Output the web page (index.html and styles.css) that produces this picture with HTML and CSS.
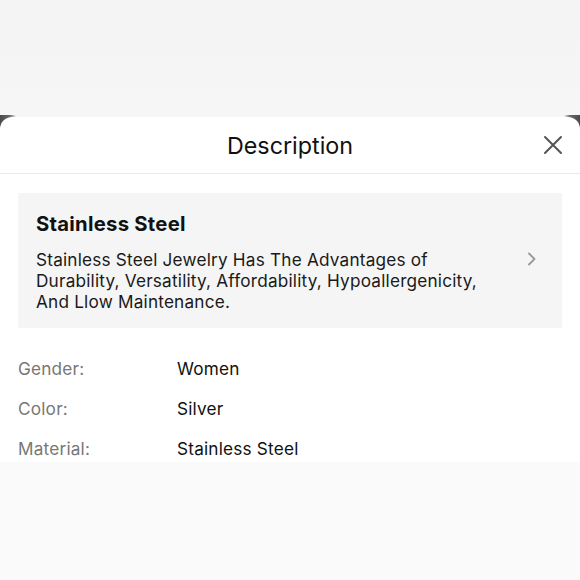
FILE: index.html
```html
<!DOCTYPE html>
<html>
<head>
<meta charset="utf-8">
<link rel="stylesheet" href="styles.css">
</head>
<body>
<div class="top-area"><div class="corner-strip"></div></div>
<div class="sheet">
  <div class="header">
    <div class="title">Description</div>
    <svg class="close" width="20" height="20" viewBox="0 0 20 20"><path d="M2 2 L18 18 M18 2 L2 18" stroke="#555" stroke-width="2" fill="none" stroke-linecap="round"/></svg>
  </div>
  <div class="content">
    <div class="card">
      <div class="card-text">
        <div class="card-title">Stainless Steel</div>
        <div class="card-body">Stainless Steel Jewelry Has The Advantages of Durability, Versatility, Affordability, Hypoallergenicity, And Llow Maintenance.</div>
      </div>
      <svg class="chev" width="10" height="14" viewBox="0 0 10 14"><path d="M2 1.5 L7.5 7 L2 12.5" stroke="#999" stroke-width="1.8" fill="none" stroke-linecap="round" stroke-linejoin="round"/></svg>
    </div>
    <div class="specs">
      <div class="row"><span class="label">Gender:</span><span class="value">Women</span></div>
      <div class="row"><span class="label">Color:</span><span class="value">Silver</span></div>
      <div class="row"><span class="label">Material:</span><span class="value">Stainless Steel</span></div>
    </div>
  </div>
</div>
<div class="bottom-area"></div>
</body>
</html>
```
FILE: styles.css
```css
* { box-sizing: border-box; }
html, body { margin: 0; padding: 0; }
body {
  width: 580px;
  height: 580px;
  overflow: hidden;
  background: #fafafa;
  font-family: Inter, "Liberation Sans", Arial, sans-serif;
  color: #111;
}
.top-area {
  height: 129px;
  background: linear-gradient(to bottom, #f3f3f3, #f7f7f7);
  display: flex;
  flex-direction: column;
  justify-content: flex-end;
}
.corner-strip {
  height: 14px;
  background: linear-gradient(to right, #4a4a4a 0, #6a6a6a 10px, #f7f7f7 16px, #f7f7f7 calc(100% - 16px), #6a6a6a calc(100% - 10px), #4a4a4a 100%);
}
.sheet {
  margin-top: -12px;
  height: 345px;
  background: #fff;
  border-radius: 12px 12px 0 0;
  overflow: hidden;
  position: relative;
}
.header {
  height: 57px;
  border-bottom: 1px solid #e9e9e9;
  display: flex;
  align-items: center;
  justify-content: center;
  position: relative;
}
.title {
  font-size: 23.3px;
  color: #111;
  padding-top: 1px;
}
.close {
  position: absolute;
  right: 17px;
  top: 18px;
}
.content {
  padding: 19px 18px 0 18px;
}
.card {
  background: #f5f5f5;
  padding: 18px 18px 16px 18px;
  display: flex;
  align-items: center;
  height: 135px;
}
.card-text { flex: 1; }
.card-title {
  font-weight: 700;
  font-size: 20.3px;
  letter-spacing: 0.25px;
  line-height: 24px;
  margin-bottom: 13px;
}
.card-body {
  font-size: 17.2px;
  letter-spacing: 0.2px;
  line-height: 21px;
  width: 455px;
  color: #1a1a1a;
}
.chev {
  margin-right: 7px;
  margin-top: -6px;
}
.specs {
  margin-top: 20px;
}
.row {
  height: 40px;
  display: flex;
  align-items: center;
  font-size: 17.2px;
  letter-spacing: 0.2px;
}
.label {
  width: 159px;
  color: #777;
}
.value {
  color: #111;
}
```
